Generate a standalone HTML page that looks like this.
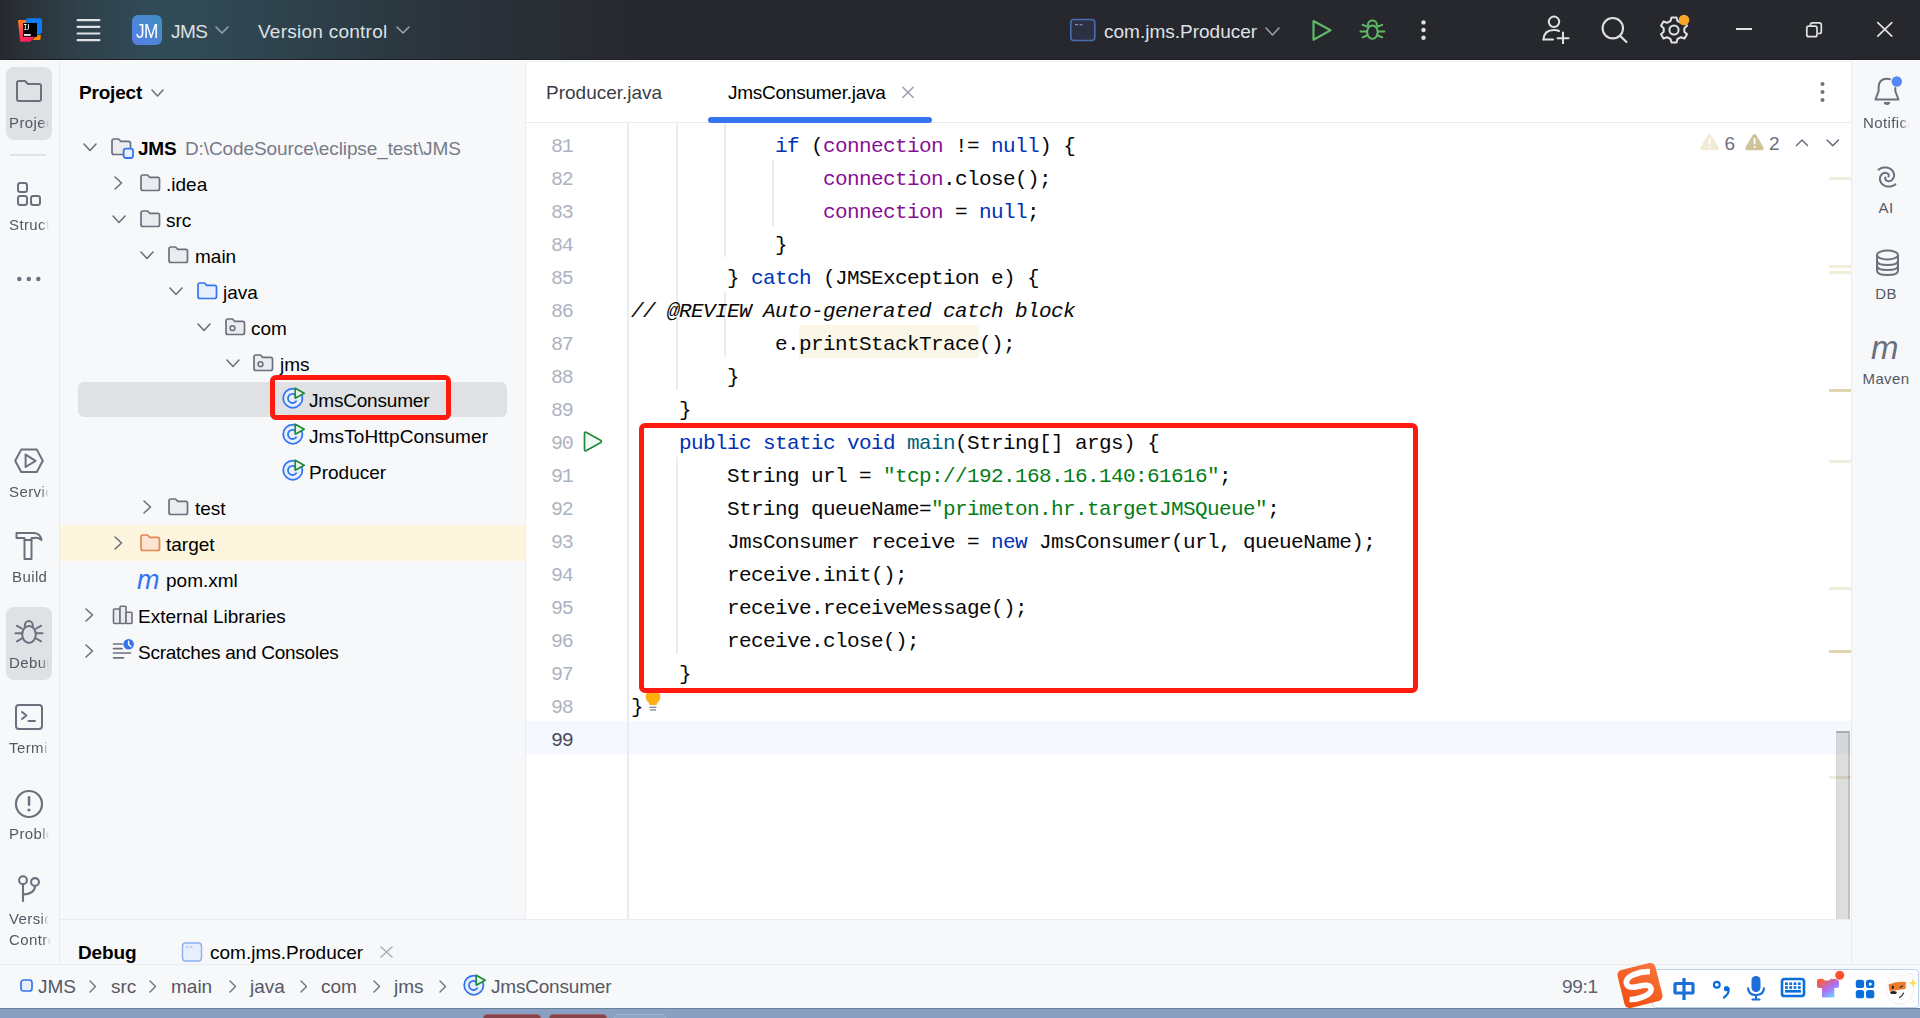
<!DOCTYPE html><html><head><meta charset="utf-8"><style>
html,body{margin:0;padding:0;}
body{width:1920px;height:1018px;position:relative;overflow:hidden;background:#F7F8FA;font-family:"Liberation Sans", sans-serif;}
.t{position:absolute;white-space:pre;}
.box{position:absolute;}
.code{position:absolute;left:631px;white-space:pre;font-family:"Liberation Mono", monospace;font-size:21px;letter-spacing:-0.6px;height:33px;line-height:33px;color:#080808;}
.ln{position:absolute;width:60px;left:512.5px;text-align:right;white-space:pre;font-family:"Liberation Mono", monospace;font-size:20px;letter-spacing:-1.2px;height:33px;line-height:33px;color:#AEB3C2;}
.kw{color:#0033B3}.fld{color:#871094}.str{color:#067D17}.mth{color:#00627A}
</style></head><body>
<div class="box" style="left:0;top:0;width:1920px;height:60px;background:#27282E;"></div>
<div class="box" style="left:0;top:0;width:700px;height:59px;background:linear-gradient(to right, #27282E 0px, #2A2F36 18px, #2F414B 80px, #314B56 150px, #314C57 175px, #2F4550 260px, #2C3A43 370px, #2A3139 480px, #27282E 640px);"></div>
<svg style="position:absolute;left:17px;top:17px;" width="26" height="26" viewBox="0 0 26 26"><defs><linearGradient id="lg1" x1="0" y1="0" x2="0.3" y2="1"><stop offset="0" stop-color="#FF8A12"/><stop offset="0.55" stop-color="#FF3A5C"/><stop offset="1" stop-color="#FF2158"/></linearGradient></defs><path d="M1 4 Q1 3 2.2 3 H9.5 L12 8 L22 16 L13 24.8 H4 Q3.2 24.8 3.1 24 Z" fill="url(#lg1)"/><path d="M9.4 1.6 Q9.9 1.3 10.5 1.3 H23.6 Q25 1.3 25 2.8 V15.6 L19 19.5 H8 Z" fill="#0A7BFA"/><path d="M15.6 22.9 L19.5 19 L23.6 17.5 V21.8 Q23.6 22.9 22.5 22.9 Z" fill="#FF8A00"/><rect x="6" y="6" width="14" height="13.8" fill="#000"/><path d="M7 7.1 H9.6 V7.9 H8.7 V11.9 H9.6 V12.7 H7 V11.9 H7.9 V7.9 H7 Z" fill="#fff"/><path d="M10.9 7.1 H11.8 V11.6 Q11.8 12.7 10.8 12.7 H9.9 V11.9 H10.9 Z" fill="#fff"/><rect x="7" y="17.1" width="6.7" height="1.7" fill="#fff"/></svg>
<svg style="position:absolute;left:76px;top:18px;" width="26" height="24" viewBox="0 0 26 24"><rect x="0.5" y="1.0" width="24" height="2.2" rx="1.1" fill="#DFE1E5"/><rect x="0.5" y="7.7" width="24" height="2.2" rx="1.1" fill="#DFE1E5"/><rect x="0.5" y="14.4" width="24" height="2.2" rx="1.1" fill="#DFE1E5"/><rect x="0.5" y="21.1" width="24" height="2.2" rx="1.1" fill="#DFE1E5"/></svg>
<svg style="position:absolute;left:132px;top:15px;" width="30" height="30" viewBox="0 0 30 30"><defs><linearGradient id="jm" x1="0" y1="1" x2="1" y2="0"><stop offset="0" stop-color="#5A7FE8"/><stop offset="1" stop-color="#3E8FC2"/></linearGradient></defs><rect x="0" y="0" width="30" height="30" rx="6" fill="url(#jm)"/></svg>
<div class="t" style="left:136px;top:16.0px;height:30px;line-height:30px;font-size:20px;color:#FFFFFF;font-weight:normal;letter-spacing:-0.6px;transform:scaleX(0.86);transform-origin:0 0;">JM</div>
<div class="t" style="left:171px;top:16.8px;height:30px;line-height:30px;font-size:19px;color:#DFE1E5;font-weight:normal;letter-spacing:-0.6px;">JMS</div>
<svg style="position:absolute;left:214.0px;top:25.0px;" width="16" height="10" viewBox="0 0 16 10"><path d="M2 2 L8.0 8 L14 2" fill="none" stroke="#9DA0A8" stroke-width="1.6" stroke-linecap="round" stroke-linejoin="round"/></svg>
<div class="t" style="left:258px;top:16.8px;height:30px;line-height:30px;font-size:19px;color:#DFE1E5;font-weight:normal;letter-spacing:0.25px;">Version control</div>
<svg style="position:absolute;left:395.0px;top:25.0px;" width="16" height="10" viewBox="0 0 16 10"><path d="M2 2 L8.0 8 L14 2" fill="none" stroke="#9DA0A8" stroke-width="1.6" stroke-linecap="round" stroke-linejoin="round"/></svg>
<svg style="position:absolute;left:1069px;top:18px;" width="28" height="24" viewBox="0 0 28 24"><rect x="1.8" y="1.5" width="24" height="21" rx="3" fill="#2B3142" stroke="#4A6DB0" stroke-width="1.6"/><rect x="6" y="6" width="3" height="1.3" fill="#7A8FC0"/><rect x="10.5" y="6" width="3" height="1.3" fill="#7A8FC0"/></svg>
<div class="t" style="left:1104px;top:16.8px;height:30px;line-height:30px;font-size:19px;color:#DFE1E5;font-weight:normal;">com.jms.Producer</div>
<svg style="position:absolute;left:1263.5px;top:26.0px;" width="17" height="11" viewBox="0 0 17 11"><path d="M2 2 L8.5 9 L15 2" fill="none" stroke="#9DA0A8" stroke-width="1.6" stroke-linecap="round" stroke-linejoin="round"/></svg>
<svg style="position:absolute;left:1310px;top:18px;" width="24" height="25" viewBox="0 0 24 25"><path d="M3.5 3 L20.5 12.3 L3.5 21.7 Z" fill="none" stroke="#5FB865" stroke-width="2.2" stroke-linejoin="round"/></svg>
<svg style="position:absolute;left:1358px;top:17px;" width="30" height="26" viewBox="0 0 30 26"><g fill="none" stroke="#5FB865" stroke-width="2" stroke-linecap="round"><path d="M10 8.5 V7.4 A4.4 3.9 0 0 1 18.8 7.4 V8.5"/><ellipse cx="14.4" cy="15.1" rx="5.3" ry="6.6"/><path d="M4.6 7.9 L9 9.5 M2.5 14.4 H8.5 M4.6 20.4 L9 18.5 M24.2 7.9 L19.8 9.5 M26.3 14.4 H20.3 M24.2 20.4 L19.8 18.5"/></g></svg>
<svg style="position:absolute;left:1419px;top:19px;" width="9" height="22" viewBox="0 0 9 22"><circle cx="4.5" cy="3.4" r="2.2" fill="#DFE1E5"/><circle cx="4.5" cy="11" r="2.2" fill="#DFE1E5"/><circle cx="4.5" cy="18.7" r="2.2" fill="#DFE1E5"/></svg>
<svg style="position:absolute;left:1540px;top:14px;" width="32" height="30" viewBox="0 0 32 30"><g fill="none" stroke="#DFE1E5" stroke-width="2" stroke-linecap="round"><circle cx="14" cy="7.8" r="5.2"/><path d="M3.5 25.5 Q4 16 14 16 Q17 16 19 17"/><path d="M3.5 25.5 H13"/><path d="M23 18.5 V30 M17.5 24.3 H28.5"/></g></svg>
<svg style="position:absolute;left:1598px;top:14px;" width="32" height="32" viewBox="0 0 32 32"><g fill="none" stroke="#DFE1E5" stroke-width="2.1" stroke-linecap="round"><circle cx="14.8" cy="14.2" r="10.2"/><path d="M22 21.7 L28.5 28"/></g></svg>
<svg style="position:absolute;left:1660px;top:15px;" width="30" height="30" viewBox="0 0 30 30"><g fill="none" stroke="#DFE1E5" stroke-width="2" stroke-linejoin="round"><path d="M11.5 2.5 H16.5 L17.5 6 L21 7.8 L24.5 6.5 L27 10.8 L24.3 13.2 V16.8 L27 19.2 L24.5 23.5 L21 22.2 L17.5 24 L16.5 27.5 H11.5 L10.5 24 L7 22.2 L3.5 23.5 L1 19.2 L3.7 16.8 V13.2 L1 10.8 L3.5 6.5 L7 7.8 L10.5 6 Z"/><circle cx="14" cy="15" r="4.6"/></g></svg>
<svg style="position:absolute;left:1678px;top:14px;" width="12" height="12" viewBox="0 0 12 12"><circle cx="6" cy="6" r="5.3" fill="#F6A623"/></svg>
<div class="box" style="left:1736px;top:28px;width:16px;height:2px;background:#DFE1E5;"></div>
<svg style="position:absolute;left:1805px;top:21px;" width="20" height="19" viewBox="0 0 20 19"><g fill="none" stroke="#DFE1E5" stroke-width="1.7"><rect x="1.8" y="5.2" width="10.2" height="10.5" rx="2"/><path d="M5.5 4.8 V3.8 Q5.5 1.8 7.5 1.8 H14.3 Q16.3 1.8 16.3 3.8 V10.5 Q16.3 12.5 14.3 12.5 H13"/></g></svg>
<svg style="position:absolute;left:1874px;top:19px;" width="22" height="21" viewBox="0 0 22 21"><g stroke="#DFE1E5" stroke-width="1.7" stroke-linecap="round"><path d="M3.8 3.6 L17.8 17.2 M17.8 3.6 L3.8 17.2"/></g></svg>
<div class="box" style="left:59px;top:60px;width:1px;height:905px;background:#EBECF0;"></div>
<div class="box" style="left:6px;top:67px;width:46px;height:73px;border-radius:8px;background:#DFE1E5;"></div>
<svg style="position:absolute;left:15px;top:79px;" width="28" height="24" viewBox="0 0 28 24"><path d="M2 4 Q2 2 4 2 H10 L13 5 H24 Q26 5 26 7 V20 Q26 22 24 22 H4 Q2 22 2 20 Z" fill="none" stroke="#6C707E" stroke-width="2" stroke-linejoin="round"/></svg>
<div class="t" style="left:9px;top:110.5px;width:40px;overflow:hidden;height:24px;line-height:24px;font-size:15px;letter-spacing:0.4px;color:#555864;-webkit-mask-image:linear-gradient(to right,#000 80%,transparent 100%);mask-image:linear-gradient(to right,#000 80%,transparent 100%);">Project</div>
<div class="box" style="left:10px;top:154px;width:36px;height:2px;background:#DFE1E5;"></div>
<svg style="position:absolute;left:16px;top:180.5px;" width="28" height="30" viewBox="0 0 28 30"><g fill="none" stroke="#6C707E" stroke-width="2"><rect x="2" y="2" width="9" height="9" rx="2.2"/><rect x="2" y="15" width="9" height="9" rx="2.2"/><rect x="15" y="15" width="9" height="9" rx="2.2"/></g></svg>
<div class="t" style="left:9px;top:212.5px;width:40px;overflow:hidden;height:24px;line-height:24px;font-size:15px;letter-spacing:0.4px;color:#555864;-webkit-mask-image:linear-gradient(to right,#000 80%,transparent 100%);mask-image:linear-gradient(to right,#000 80%,transparent 100%);">Structure</div>
<svg style="position:absolute;left:15px;top:273px;" width="28" height="12" viewBox="0 0 28 12"><g fill="#6C707E"><circle cx="4.3" cy="6" r="2.2"/><circle cx="13.8" cy="6" r="2.2"/><circle cx="23.3" cy="6" r="2.2"/></g></svg>
<svg style="position:absolute;left:13px;top:446px;" width="32" height="30" viewBox="0 0 32 30"><g fill="none" stroke="#6C707E" stroke-width="2" stroke-linejoin="round"><path d="M8.2 3.6 H23.8 L29.8 14.8 L23.8 26 H8.2 L2.2 14.8 Z"/><path d="M12.6 8.6 L22.6 14.8 L12.6 21 Z"/></g></svg>
<div class="t" style="left:9px;top:479.5px;width:40px;overflow:hidden;height:24px;line-height:24px;font-size:15px;letter-spacing:0.4px;color:#555864;-webkit-mask-image:linear-gradient(to right,#000 80%,transparent 100%);mask-image:linear-gradient(to right,#000 80%,transparent 100%);">Services</div>
<svg style="position:absolute;left:14px;top:530px;" width="30" height="32" viewBox="0 0 30 32"><g fill="none" stroke="#6C707E" stroke-width="2" stroke-linejoin="round"><path d="M2.5 3 H20 Q26.5 3.5 27.5 10 Q24 7 20 8 H17.5 V10 H10.5 V8 H2.5 Z"/><path d="M10.5 10 V29 H17.5 V10"/></g></svg>
<div class="t" style="left:12px;top:564.5px;width:50px;overflow:hidden;height:24px;line-height:24px;font-size:15px;letter-spacing:0.4px;color:#555864;-webkit-mask-image:linear-gradient(to right,#000 80%,transparent 100%);mask-image:linear-gradient(to right,#000 80%,transparent 100%);">Build</div>
<div class="box" style="left:6px;top:607px;width:46px;height:73px;border-radius:8px;background:#DFE1E5;"></div>
<svg style="position:absolute;left:14px;top:617px;" width="30" height="30" viewBox="0 0 30 30"><g fill="none" stroke="#6C707E" stroke-width="2" stroke-linecap="round"><path d="M10.8 9.5 V8.6 A4 4.6 0 0 1 18.8 8.6 V9.5"/><ellipse cx="15" cy="17.4" rx="6.8" ry="8.5"/><path d="M3 8.8 L7.8 11.5 M1.5 16.2 H7.3 M3 24.3 L7.8 21.5 M27 8.8 L22.2 11.5 M28.5 16.2 H22.7 M27 24.3 L22.2 21.5"/></g></svg>
<div class="t" style="left:9px;top:650.5px;width:40px;overflow:hidden;height:24px;line-height:24px;font-size:15px;letter-spacing:0.4px;color:#555864;-webkit-mask-image:linear-gradient(to right,#000 80%,transparent 100%);mask-image:linear-gradient(to right,#000 80%,transparent 100%);">Debug</div>
<svg style="position:absolute;left:14px;top:703px;" width="30" height="28" viewBox="0 0 30 28"><g fill="none" stroke="#6C707E" stroke-width="2" stroke-linecap="round" stroke-linejoin="round"><rect x="2" y="2" width="26" height="24" rx="3"/><path d="M8 9 L12.5 12.5 L8 16 M14.5 18 H21"/></g></svg>
<div class="t" style="left:9px;top:735.5px;width:40px;overflow:hidden;height:24px;line-height:24px;font-size:15px;letter-spacing:0.4px;color:#555864;-webkit-mask-image:linear-gradient(to right,#000 80%,transparent 100%);mask-image:linear-gradient(to right,#000 80%,transparent 100%);">Terminal</div>
<svg style="position:absolute;left:13px;top:788px;" width="32" height="32" viewBox="0 0 32 32"><g fill="none" stroke="#6C707E" stroke-width="2.2"><circle cx="16" cy="16" r="13"/></g><rect x="14.8" y="8" width="2.5" height="10" rx="1.2" fill="#6C707E"/><circle cx="16" cy="22" r="1.6" fill="#6C707E"/></svg>
<div class="t" style="left:9px;top:821.5px;width:40px;overflow:hidden;height:24px;line-height:24px;font-size:15px;letter-spacing:0.4px;color:#555864;-webkit-mask-image:linear-gradient(to right,#000 80%,transparent 100%);mask-image:linear-gradient(to right,#000 80%,transparent 100%);">Problems</div>
<svg style="position:absolute;left:14px;top:872px;" width="30" height="32" viewBox="0 0 30 32"><g fill="none" stroke="#6C707E" stroke-width="2.1" stroke-linecap="round"><circle cx="9" cy="8.2" r="3.9"/><circle cx="21" cy="10" r="3.9"/><path d="M9 12.1 V29 M21 13.9 Q21 21.5 9 22.5"/></g></svg>
<div class="t" style="left:9px;top:906.5px;width:40px;overflow:hidden;height:24px;line-height:24px;font-size:15px;letter-spacing:0.4px;color:#555864;-webkit-mask-image:linear-gradient(to right,#000 80%,transparent 100%);mask-image:linear-gradient(to right,#000 80%,transparent 100%);">Version Control</div>
<div class="t" style="left:9px;top:927.5px;width:42px;overflow:hidden;height:24px;line-height:24px;font-size:15px;letter-spacing:0.4px;color:#555864;-webkit-mask-image:linear-gradient(to right,#000 80%,transparent 100%);mask-image:linear-gradient(to right,#000 80%,transparent 100%);">Control</div>
<div class="t" style="left:79px;top:74.8px;height:36px;line-height:36px;font-size:19px;color:#000;font-weight:bold;letter-spacing:-0.2px;">Project</div>
<svg style="position:absolute;left:149.5px;top:88.0px;" width="15" height="10" viewBox="0 0 15 10"><path d="M2 2 L7.5 8 L13 2" fill="none" stroke="#6C707E" stroke-width="1.6" stroke-linecap="round" stroke-linejoin="round"/></svg>
<div class="box" style="left:78px;top:382px;width:429px;height:35px;border-radius:6px;background:#DFE1E5;"></div>
<div class="box" style="left:60px;top:525px;width:465px;height:36px;background:#FDF5DD;"></div>
<svg style="position:absolute;left:82.0px;top:141.75px;" width="16" height="10.5" viewBox="0 0 16 10.5"><path d="M2 2 L8.0 8.5 L14 2" fill="none" stroke="#6C707E" stroke-width="1.6" stroke-linecap="round" stroke-linejoin="round"/></svg>
<svg style="position:absolute;left:111px;top:138px;" width="21" height="18" viewBox="0 0 21 18"><path d="M1 3 Q1 1 3 1 H7.5 L9.8 3.3 H17.5 Q19.5 3.3 19.5 5.3 V14.5 Q19.5 16.5 17.5 16.5 H3 Q1 16.5 1 14.5 Z" fill="#EBECF0" stroke="#6C707E" stroke-width="1.7" stroke-linejoin="round"/></svg>
<svg style="position:absolute;left:122px;top:147px;" width="13" height="13" viewBox="0 0 13 13"><rect x="1.6" y="1.6" width="9.4" height="9.4" rx="2.2" fill="#E7EFFD" stroke="#3574F0" stroke-width="1.8"/></svg>
<div class="t" style="left:138px;top:130.8px;height:36px;line-height:36px;font-size:19px;color:#000;font-weight:bold;letter-spacing:-0.2px;">JMS</div>
<div class="t" style="left:185px;top:130.8px;height:36px;line-height:36px;font-size:19px;color:#777B89;font-weight:normal;letter-spacing:-0.1px;">D:\CodeSource\eclipse_test\JMS</div>
<svg style="position:absolute;left:113.25px;top:175.0px;" width="10.5" height="16" viewBox="0 0 10.5 16"><path d="M2 2 L8.5 8.0 L2 14" fill="none" stroke="#6C707E" stroke-width="1.6" stroke-linecap="round" stroke-linejoin="round"/></svg>
<svg style="position:absolute;left:140px;top:174px;" width="21" height="18" viewBox="0 0 21 18"><path d="M1 3 Q1 1 3 1 H7.5 L9.8 3.3 H17.5 Q19.5 3.3 19.5 5.3 V14.5 Q19.5 16.5 17.5 16.5 H3 Q1 16.5 1 14.5 Z" fill="#EBECF0" stroke="#6C707E" stroke-width="1.7" stroke-linejoin="round"/></svg>
<div class="t" style="left:166px;top:166.8px;height:36px;line-height:36px;font-size:19px;color:#000;font-weight:normal;">.idea</div>
<svg style="position:absolute;left:111.0px;top:213.75px;" width="16" height="10.5" viewBox="0 0 16 10.5"><path d="M2 2 L8.0 8.5 L14 2" fill="none" stroke="#6C707E" stroke-width="1.6" stroke-linecap="round" stroke-linejoin="round"/></svg>
<svg style="position:absolute;left:140px;top:210px;" width="21" height="18" viewBox="0 0 21 18"><path d="M1 3 Q1 1 3 1 H7.5 L9.8 3.3 H17.5 Q19.5 3.3 19.5 5.3 V14.5 Q19.5 16.5 17.5 16.5 H3 Q1 16.5 1 14.5 Z" fill="#EBECF0" stroke="#6C707E" stroke-width="1.7" stroke-linejoin="round"/></svg>
<div class="t" style="left:166px;top:202.8px;height:36px;line-height:36px;font-size:19px;color:#000;font-weight:normal;">src</div>
<svg style="position:absolute;left:139.0px;top:249.75px;" width="16" height="10.5" viewBox="0 0 16 10.5"><path d="M2 2 L8.0 8.5 L14 2" fill="none" stroke="#6C707E" stroke-width="1.6" stroke-linecap="round" stroke-linejoin="round"/></svg>
<svg style="position:absolute;left:168px;top:246px;" width="21" height="18" viewBox="0 0 21 18"><path d="M1 3 Q1 1 3 1 H7.5 L9.8 3.3 H17.5 Q19.5 3.3 19.5 5.3 V14.5 Q19.5 16.5 17.5 16.5 H3 Q1 16.5 1 14.5 Z" fill="#EBECF0" stroke="#6C707E" stroke-width="1.7" stroke-linejoin="round"/></svg>
<div class="t" style="left:195px;top:238.8px;height:36px;line-height:36px;font-size:19px;color:#000;font-weight:normal;">main</div>
<svg style="position:absolute;left:168.0px;top:285.75px;" width="16" height="10.5" viewBox="0 0 16 10.5"><path d="M2 2 L8.0 8.5 L14 2" fill="none" stroke="#6C707E" stroke-width="1.6" stroke-linecap="round" stroke-linejoin="round"/></svg>
<svg style="position:absolute;left:197px;top:282px;" width="21" height="18" viewBox="0 0 21 18"><path d="M1 3 Q1 1 3 1 H7.5 L9.8 3.3 H17.5 Q19.5 3.3 19.5 5.3 V14.5 Q19.5 16.5 17.5 16.5 H3 Q1 16.5 1 14.5 Z" fill="#E7EFFD" stroke="#3574F0" stroke-width="1.7" stroke-linejoin="round"/></svg>
<div class="t" style="left:223px;top:274.8px;height:36px;line-height:36px;font-size:19px;color:#000;font-weight:normal;">java</div>
<svg style="position:absolute;left:196.0px;top:321.75px;" width="16" height="10.5" viewBox="0 0 16 10.5"><path d="M2 2 L8.0 8.5 L14 2" fill="none" stroke="#6C707E" stroke-width="1.6" stroke-linecap="round" stroke-linejoin="round"/></svg>
<svg style="position:absolute;left:225px;top:318px;" width="21" height="18" viewBox="0 0 21 18"><path d="M1 3 Q1 1 3 1 H7.5 L9.8 3.3 H17.5 Q19.5 3.3 19.5 5.3 V14.5 Q19.5 16.5 17.5 16.5 H3 Q1 16.5 1 14.5 Z" fill="#EBECF0" stroke="#6C707E" stroke-width="1.7" stroke-linejoin="round"/><circle cx="7.5" cy="10.2" r="2.4" fill="none" stroke="#6C707E" stroke-width="1.5"/></svg>
<div class="t" style="left:251px;top:310.8px;height:36px;line-height:36px;font-size:19px;color:#000;font-weight:normal;">com</div>
<svg style="position:absolute;left:225.0px;top:357.75px;" width="16" height="10.5" viewBox="0 0 16 10.5"><path d="M2 2 L8.0 8.5 L14 2" fill="none" stroke="#6C707E" stroke-width="1.6" stroke-linecap="round" stroke-linejoin="round"/></svg>
<svg style="position:absolute;left:253px;top:354px;" width="21" height="18" viewBox="0 0 21 18"><path d="M1 3 Q1 1 3 1 H7.5 L9.8 3.3 H17.5 Q19.5 3.3 19.5 5.3 V14.5 Q19.5 16.5 17.5 16.5 H3 Q1 16.5 1 14.5 Z" fill="#EBECF0" stroke="#6C707E" stroke-width="1.7" stroke-linejoin="round"/><circle cx="7.5" cy="10.2" r="2.4" fill="none" stroke="#6C707E" stroke-width="1.5"/></svg>
<div class="t" style="left:280px;top:346.8px;height:36px;line-height:36px;font-size:19px;color:#000;font-weight:normal;">jms</div>
<svg style="position:absolute;left:282px;top:387px;" width="24" height="23" viewBox="0 0 24 23"><circle cx="10.8" cy="11.2" r="9.6" fill="#E7EFFD" stroke="#3574F0" stroke-width="1.8"/><path d="M14.2 8.6 A4.6 4.6 0 1 0 14.6 13.6" fill="none" stroke="#3574F0" stroke-width="1.8"/><path d="M13.2 1.2 L22.2 6.2 L13.2 11.2 Z" fill="#E8F5E9" stroke="#208A3C" stroke-width="1.7" stroke-linejoin="round"/></svg>
<div class="t" style="left:309px;top:382.8px;height:36px;line-height:36px;font-size:19px;color:#000;font-weight:normal;letter-spacing:-0.2px;">JmsConsumer</div>
<svg style="position:absolute;left:282px;top:423px;" width="24" height="23" viewBox="0 0 24 23"><circle cx="10.8" cy="11.2" r="9.6" fill="#E7EFFD" stroke="#3574F0" stroke-width="1.8"/><path d="M14.2 8.6 A4.6 4.6 0 1 0 14.6 13.6" fill="none" stroke="#3574F0" stroke-width="1.8"/><path d="M13.2 1.2 L22.2 6.2 L13.2 11.2 Z" fill="#E8F5E9" stroke="#208A3C" stroke-width="1.7" stroke-linejoin="round"/></svg>
<div class="t" style="left:309px;top:418.8px;height:36px;line-height:36px;font-size:19px;color:#000;font-weight:normal;letter-spacing:0.1px;">JmsToHttpConsumer</div>
<svg style="position:absolute;left:282px;top:459px;" width="24" height="23" viewBox="0 0 24 23"><circle cx="10.8" cy="11.2" r="9.6" fill="#E7EFFD" stroke="#3574F0" stroke-width="1.8"/><path d="M14.2 8.6 A4.6 4.6 0 1 0 14.6 13.6" fill="none" stroke="#3574F0" stroke-width="1.8"/><path d="M13.2 1.2 L22.2 6.2 L13.2 11.2 Z" fill="#E8F5E9" stroke="#208A3C" stroke-width="1.7" stroke-linejoin="round"/></svg>
<div class="t" style="left:309px;top:454.8px;height:36px;line-height:36px;font-size:19px;color:#000;font-weight:normal;">Producer</div>
<svg style="position:absolute;left:141.75px;top:499.0px;" width="10.5" height="16" viewBox="0 0 10.5 16"><path d="M2 2 L8.5 8.0 L2 14" fill="none" stroke="#6C707E" stroke-width="1.6" stroke-linecap="round" stroke-linejoin="round"/></svg>
<svg style="position:absolute;left:168px;top:498px;" width="21" height="18" viewBox="0 0 21 18"><path d="M1 3 Q1 1 3 1 H7.5 L9.8 3.3 H17.5 Q19.5 3.3 19.5 5.3 V14.5 Q19.5 16.5 17.5 16.5 H3 Q1 16.5 1 14.5 Z" fill="#EBECF0" stroke="#6C707E" stroke-width="1.7" stroke-linejoin="round"/></svg>
<div class="t" style="left:195px;top:490.8px;height:36px;line-height:36px;font-size:19px;color:#000;font-weight:normal;">test</div>
<svg style="position:absolute;left:113.25px;top:535.0px;" width="10.5" height="16" viewBox="0 0 10.5 16"><path d="M2 2 L8.5 8.0 L2 14" fill="none" stroke="#6C707E" stroke-width="1.6" stroke-linecap="round" stroke-linejoin="round"/></svg>
<svg style="position:absolute;left:140px;top:534px;" width="21" height="18" viewBox="0 0 21 18"><path d="M1 3 Q1 1 3 1 H7.5 L9.8 3.3 H17.5 Q19.5 3.3 19.5 5.3 V14.5 Q19.5 16.5 17.5 16.5 H3 Q1 16.5 1 14.5 Z" fill="#FCE3D2" stroke="#E08855" stroke-width="1.7" stroke-linejoin="round"/></svg>
<div class="t" style="left:166px;top:526.8px;height:36px;line-height:36px;font-size:19px;color:#000;font-weight:normal;">target</div>
<div class="t" style="left:137px;top:561.8px;height:36px;line-height:36px;font-size:27px;color:#3574F0;font-weight:normal;letter-spacing:0px;font-style:italic;">m</div>
<div class="t" style="left:166px;top:562.8px;height:36px;line-height:36px;font-size:19px;color:#000;font-weight:normal;">pom.xml</div>
<svg style="position:absolute;left:84.25px;top:607.0px;" width="10.5" height="16" viewBox="0 0 10.5 16"><path d="M2 2 L8.5 8.0 L2 14" fill="none" stroke="#6C707E" stroke-width="1.6" stroke-linecap="round" stroke-linejoin="round"/></svg>
<svg style="position:absolute;left:112px;top:605px;" width="22" height="20" viewBox="0 0 22 20"><g fill="#EBECF0" stroke="#6C707E" stroke-width="1.6" stroke-linejoin="round"><rect x="1.5" y="4" width="6.5" height="14.5" rx="1"/><rect x="8" y="1.2" width="6" height="17.3" rx="1"/><rect x="14" y="7.2" width="6" height="11.3" rx="1"/></g></svg>
<div class="t" style="left:138px;top:598.8px;height:36px;line-height:36px;font-size:19px;color:#000;font-weight:normal;letter-spacing:0px;">External Libraries</div>
<svg style="position:absolute;left:84.25px;top:643.0px;" width="10.5" height="16" viewBox="0 0 10.5 16"><path d="M2 2 L8.5 8.0 L2 14" fill="none" stroke="#6C707E" stroke-width="1.6" stroke-linecap="round" stroke-linejoin="round"/></svg>
<svg style="position:absolute;left:112px;top:638px;" width="24" height="22" viewBox="0 0 24 22"><g stroke="#6C707E" stroke-width="1.7" stroke-linecap="round"><path d="M1.5 6 H10 M1.5 10.6 H10 M1.5 15 H18.5 M1.5 19.8 H11.5"/></g><circle cx="16.6" cy="6.3" r="5.3" fill="#3574F0"/><path d="M16.6 3.3 V6.5 L18.8 8.4" fill="none" stroke="#fff" stroke-width="1.4" stroke-linecap="round"/></svg>
<div class="t" style="left:138px;top:634.8px;height:36px;line-height:36px;font-size:19px;color:#000;font-weight:normal;letter-spacing:-0.25px;">Scratches and Consoles</div>
<div class="box" style="left:525px;top:60px;width:1px;height:860px;background:#EBECF0;"></div>
<div class="box" style="left:526px;top:60px;width:1325px;height:859px;background:#FFFFFF;"></div>
<div class="box" style="left:526px;top:122px;width:1325px;height:1px;background:#EBECF0;"></div>
<div class="t" style="left:546px;top:74.8px;height:36px;line-height:36px;font-size:19px;color:#3C3E45;font-weight:normal;letter-spacing:0px;">Producer.java</div>
<div class="t" style="left:728px;top:74.8px;height:36px;line-height:36px;font-size:19px;color:#000;font-weight:normal;letter-spacing:-0.25px;">JmsConsumer.java</div>
<svg style="position:absolute;left:900px;top:85px;" width="16" height="15" viewBox="0 0 16 15"><path d="M2.8 2.3 L13.2 12.5 M13.2 2.3 L2.8 12.5" stroke="#9A9EAB" stroke-width="1.5" stroke-linecap="round"/></svg>
<div class="box" style="left:708px;top:117px;width:224px;height:6px;border-radius:3px;background:#3574F0;"></div>
<svg style="position:absolute;left:1818px;top:80px;" width="9" height="24" viewBox="0 0 9 24"><circle cx="4.5" cy="4" r="2" fill="#6C707E"/><circle cx="4.5" cy="12" r="2" fill="#6C707E"/><circle cx="4.5" cy="20" r="2" fill="#6C707E"/></svg>
<div class="box" style="left:526px;top:721px;width:1325px;height:33px;background:#F5F8FE;"></div>
<div class="box" style="left:627px;top:123px;width:1.5px;height:796px;background:#EBECF0;"></div>
<div class="box" style="left:676px;top:123px;width:1.5px;height:267px;background:#EBECF0;"></div>
<div class="box" style="left:724px;top:123px;width:1.5px;height:134px;background:#EBECF0;"></div>
<div class="box" style="left:724px;top:292px;width:1.5px;height:65px;background:#EBECF0;"></div>
<div class="box" style="left:772px;top:160px;width:1.5px;height:66px;background:#EBECF0;"></div>
<div class="box" style="left:676px;top:457px;width:1.5px;height:197px;background:#EBECF0;"></div>
<div class="box" style="left:799px;top:325px;width:180px;height:33px;background:#FAF6E8;"></div>
<div class="ln" style="top:130px;">81</div>
<div class="code" style="top:130px;">            <span class="kw">if</span> (<span class="fld">connection</span> != <span class="kw">null</span>) {</div>
<div class="ln" style="top:163px;">82</div>
<div class="code" style="top:163px;">                <span class="fld">connection</span>.close();</div>
<div class="ln" style="top:196px;">83</div>
<div class="code" style="top:196px;">                <span class="fld">connection</span> = <span class="kw">null</span>;</div>
<div class="ln" style="top:229px;">84</div>
<div class="code" style="top:229px;">            }</div>
<div class="ln" style="top:262px;">85</div>
<div class="code" style="top:262px;">        } <span class="kw">catch</span> (JMSException e) {</div>
<div class="ln" style="top:295px;">86</div>
<div class="code" style="top:295px;"><i>// @REVIEW Auto-generated catch block</i></div>
<div class="ln" style="top:328px;">87</div>
<div class="code" style="top:328px;">            e.printStackTrace();</div>
<div class="ln" style="top:361px;">88</div>
<div class="code" style="top:361px;">        }</div>
<div class="ln" style="top:394px;">89</div>
<div class="code" style="top:394px;">    }</div>
<div class="ln" style="top:427px;">90</div>
<div class="code" style="top:427px;">    <span class="kw">public static void</span> <span class="mth">main</span>(String[] args) {</div>
<div class="ln" style="top:460px;">91</div>
<div class="code" style="top:460px;">        String url = <span class="str">"tcp://192.168.16.140:61616"</span>;</div>
<div class="ln" style="top:493px;">92</div>
<div class="code" style="top:493px;">        String queueName=<span class="str">"primeton.hr.targetJMSQueue"</span>;</div>
<div class="ln" style="top:526px;">93</div>
<div class="code" style="top:526px;">        JmsConsumer receive = <span class="kw">new</span> JmsConsumer(url, queueName);</div>
<div class="ln" style="top:559px;">94</div>
<div class="code" style="top:559px;">        receive.init();</div>
<div class="ln" style="top:592px;">95</div>
<div class="code" style="top:592px;">        receive.receiveMessage();</div>
<div class="ln" style="top:625px;">96</div>
<div class="code" style="top:625px;">        receive.close();</div>
<div class="ln" style="top:658px;">97</div>
<div class="code" style="top:658px;">    }</div>
<div class="ln" style="top:691px;">98</div>
<div class="code" style="top:691px;">}</div>
<div class="ln" style="top:724px;color:#494B57;">99</div>
<svg style="position:absolute;left:580px;top:429px;" width="26" height="26" viewBox="0 0 26 26"><path d="M4.5 4.5 Q4.5 2.5 6.5 3.5 L20.5 11.3 Q22.3 12.6 20.5 13.8 L6.5 21.6 Q4.5 22.6 4.5 20.6 Z" fill="#F0F9F1" stroke="#208A3C" stroke-width="1.7" stroke-linejoin="round"/></svg>
<svg style="position:absolute;left:643px;top:688px;" width="20" height="26" viewBox="0 0 20 26"><path d="M10 1.5 A7.2 7.2 0 0 1 15 14 Q13.5 15.5 13.5 17 H6.5 Q6.5 15.5 5 14 A7.2 7.2 0 0 1 10 1.5 Z" fill="#FFAF0F"/><rect x="6.5" y="18.6" width="7" height="1.4" fill="#8A8E9A"/><rect x="7" y="21.2" width="6" height="1.4" fill="#8A8E9A"/></svg>
<div class="box" style="left:269.5px;top:375px;width:181.3px;height:44.5px;border:5.4px solid #FF1A10;border-radius:6px;box-sizing:border-box;"></div>
<div class="box" style="left:638.5px;top:423px;width:779px;height:269.5px;border:5.4px solid #FF1A10;border-radius:6px;box-sizing:border-box;"></div>
<svg style="position:absolute;left:1699px;top:132px;" width="22" height="20" viewBox="0 0 22 20"><path d="M10.5 2 Q11.8 2 12.6 3.5 L19.3 15 Q20.4 17.9 17.8 18.2 H3.2 Q0.6 17.9 1.7 15 L8.4 3.5 Q9.2 2 10.5 2 Z" fill="#F0EAD6"/><rect x="9.6" y="6" width="1.9" height="6.5" rx="0.9" fill="#fff"/><circle cx="10.55" cy="15" r="1.1" fill="#fff"/></svg>
<div class="t" style="left:1724.5px;top:128.5px;height:30px;line-height:30px;font-size:19px;color:#6C707E;font-weight:normal;">6</div>
<svg style="position:absolute;left:1744px;top:132px;" width="22" height="20" viewBox="0 0 22 20"><path d="M10.5 2 Q11.8 2 12.6 3.5 L19.3 15 Q20.4 17.9 17.8 18.2 H3.2 Q0.6 17.9 1.7 15 L8.4 3.5 Q9.2 2 10.5 2 Z" fill="#CFC39A"/><rect x="9.6" y="6" width="1.9" height="6.5" rx="0.9" fill="#fff"/><circle cx="10.55" cy="15" r="1.1" fill="#fff"/></svg>
<div class="t" style="left:1769px;top:128.5px;height:30px;line-height:30px;font-size:19px;color:#6C707E;font-weight:normal;">2</div>
<svg style="position:absolute;left:1794px;top:137px;" width="17" height="12" viewBox="0 0 17 12"><path d="M2.5 8.5 L8 3 L13.5 8.5" fill="none" stroke="#6C707E" stroke-width="1.5" stroke-linecap="round" stroke-linejoin="round"/></svg>
<svg style="position:absolute;left:1825.25px;top:138.0px;" width="15.5" height="9.6" viewBox="0 0 15.5 9.6"><path d="M2 2 L7.75 7.6 L13.5 2" fill="none" stroke="#6C707E" stroke-width="1.5" stroke-linecap="round" stroke-linejoin="round"/></svg>
<div class="box" style="left:1829px;top:177px;width:22px;height:3px;background:#F2ECDA;"></div>
<div class="box" style="left:1829px;top:265px;width:22px;height:3px;background:#F2ECDA;"></div>
<div class="box" style="left:1829px;top:271px;width:22px;height:3px;background:#F2ECDA;"></div>
<div class="box" style="left:1829px;top:389px;width:22px;height:3px;background:#E1D5B0;"></div>
<div class="box" style="left:1829px;top:460px;width:22px;height:3px;background:#F2ECDA;"></div>
<div class="box" style="left:1829px;top:587px;width:22px;height:3px;background:#F2ECDA;"></div>
<div class="box" style="left:1829px;top:650px;width:22px;height:3px;background:#E1D5B0;"></div>
<div class="box" style="left:1829px;top:776px;width:22px;height:3px;background:#F2ECDA;"></div>
<div class="box" style="left:1836px;top:731px;width:14px;height:188px;background:rgba(0,0,0,0.135);border-top:2px solid rgba(0,0,0,0.2);border-right:2px solid rgba(0,0,0,0.12);border-left:1px solid rgba(0,0,0,0.04);box-sizing:border-box;"></div>
<div class="box" style="left:1851px;top:60px;width:1px;height:905px;background:#EBECF0;"></div>
<svg style="position:absolute;left:1873px;top:76px;" width="32" height="30" viewBox="0 0 32 30"><g fill="none" stroke="#6C707E" stroke-width="2" stroke-linecap="round" stroke-linejoin="round"><path d="M17 3.2 Q15.5 2.8 14 2.8 Q5.6 2.8 5.6 11.5 V15.2 L2.5 23.5 H25.5 L22.3 15.2 V12"/></g><path d="M10.8 26 A3.2 3 0 0 0 17.2 26 Z" fill="#6C707E"/><circle cx="23.8" cy="5.5" r="5.2" fill="#548AF7"/></svg>
<div class="t" style="left:1863px;top:110.5px;width:47px;overflow:hidden;height:24px;line-height:24px;font-size:15px;letter-spacing:0.4px;color:#555864;-webkit-mask-image:linear-gradient(to right,#000 80%,transparent 100%);">Notifications</div>
<svg style="position:absolute;left:1873px;top:163px;" width="30" height="30" viewBox="0 0 30 30"><g fill="none" stroke="#6C707E" stroke-width="2" stroke-linecap="round"><path d="M5.60 6.67 L6.82 5.84 L8.11 5.20 L9.45 4.74 L10.81 4.47 L12.16 4.38 L13.48 4.46 L14.75 4.71 L15.95 5.12 L17.04 5.66 L18.03 6.33 L18.89 7.10 L19.61 7.95 L20.20 8.87 L20.63 9.82 L20.92 10.80 L21.06 11.78 L21.06 12.73 L20.93 13.65 L20.67 14.51 L20.31 15.30 L19.85 16.01 L19.31 16.63 L18.72 17.14 L18.07 17.56 L17.40 17.86 L16.72 18.06 L16.05 18.16 L15.39 18.16 L14.78 18.07 L14.21 17.90 L13.70 17.66 L13.26 17.36 L12.90 17.02 L12.61 16.64 L12.41 16.25 L12.28 15.85 L12.23 15.47 L12.25 15.10 L12.34 14.77 L12.48 14.48"/><path d="M22.40 21.33 L21.18 22.16 L19.89 22.80 L18.55 23.26 L17.19 23.53 L15.84 23.62 L14.52 23.54 L13.25 23.29 L12.05 22.88 L10.96 22.34 L9.97 21.67 L9.11 20.90 L8.39 20.05 L7.80 19.13 L7.37 18.18 L7.08 17.20 L6.94 16.22 L6.94 15.27 L7.07 14.35 L7.33 13.49 L7.69 12.70 L8.15 11.99 L8.69 11.37 L9.28 10.86 L9.93 10.44 L10.60 10.14 L11.28 9.94 L11.95 9.84 L12.61 9.84 L13.22 9.93 L13.79 10.10 L14.30 10.34 L14.74 10.64 L15.10 10.98 L15.39 11.36 L15.59 11.75 L15.72 12.15 L15.77 12.53 L15.75 12.90 L15.66 13.23 L15.52 13.52"/></g></svg>
<div class="t" style="left:1852px;top:195.5px;width:68px;text-align:center;overflow:hidden;height:24px;line-height:24px;font-size:15px;letter-spacing:0.4px;color:#555864;">AI</div>
<svg style="position:absolute;left:1873px;top:248px;" width="30" height="30" viewBox="0 0 30 30"><g fill="none" stroke="#6C707E" stroke-width="2"><ellipse cx="14.5" cy="7" rx="10.5" ry="4.5"/><path d="M4 7 V22.5 Q4 27 14.5 27 Q25 27 25 22.5 V7 M4 12.5 Q4 17 14.5 17 Q25 17 25 12.5 M4 17.5 Q4 22 14.5 22 Q25 22 25 17.5"/></g></svg>
<div class="t" style="left:1852px;top:281.5px;width:68px;text-align:center;overflow:hidden;height:24px;line-height:24px;font-size:15px;letter-spacing:0.4px;color:#555864;">DB</div>
<div class="t" style="left:1871px;top:328.0px;height:40px;line-height:40px;font-size:33px;color:#6C707E;font-weight:normal;font-style:italic;">m</div>
<div class="t" style="left:1852px;top:366.5px;width:68px;text-align:center;overflow:hidden;height:24px;line-height:24px;font-size:15px;letter-spacing:0.4px;color:#555864;">Maven</div>
<div class="box" style="left:60px;top:919px;width:1791px;height:1px;background:#EBECF0;"></div>
<div class="t" style="left:78px;top:937.8px;height:30px;line-height:30px;font-size:19px;color:#000;font-weight:bold;letter-spacing:-0.1px;">Debug</div>
<svg style="position:absolute;left:181px;top:941px;" width="22" height="22" viewBox="0 0 22 22"><rect x="1.5" y="2" width="19" height="18" rx="3" fill="#E7EFFD" stroke="#8FB0F2" stroke-width="1.4"/><rect x="5" y="5.5" width="2.5" height="1" fill="#8FB0F2"/><rect x="9" y="5.5" width="2.5" height="1" fill="#8FB0F2"/></svg>
<div class="t" style="left:210px;top:937.8px;height:30px;line-height:30px;font-size:19px;color:#000;font-weight:normal;letter-spacing:0px;">com.jms.Producer</div>
<svg style="position:absolute;left:379px;top:945px;" width="15" height="14" viewBox="0 0 15 14"><path d="M2 2 L13 12 M13 2 L2 12" stroke="#A8ADBD" stroke-width="1.5" stroke-linecap="round"/></svg>
<div class="box" style="left:0;top:964px;width:1920px;height:1px;background:#EBECF0;"></div>
<div class="box" style="left:0;top:965px;width:1920px;height:43px;background:#F7F8FA;"></div>
<svg style="position:absolute;left:19px;top:978px;" width="16" height="16" viewBox="0 0 16 16"><rect x="2" y="2" width="11" height="11" rx="2.5" fill="#E7EFFD" stroke="#3574F0" stroke-width="1.7"/></svg>
<div class="t" style="left:38px;top:971.8px;height:30px;line-height:30px;font-size:19px;color:#555864;font-weight:normal;">JMS</div>
<div class="t" style="left:111px;top:971.8px;height:30px;line-height:30px;font-size:19px;color:#555864;font-weight:normal;">src</div>
<div class="t" style="left:171px;top:971.8px;height:30px;line-height:30px;font-size:19px;color:#555864;font-weight:normal;">main</div>
<div class="t" style="left:250px;top:971.8px;height:30px;line-height:30px;font-size:19px;color:#555864;font-weight:normal;">java</div>
<div class="t" style="left:321px;top:971.8px;height:30px;line-height:30px;font-size:19px;color:#555864;font-weight:normal;">com</div>
<div class="t" style="left:394px;top:971.8px;height:30px;line-height:30px;font-size:19px;color:#555864;font-weight:normal;">jms</div>
<svg style="position:absolute;left:87.75px;top:978.5px;" width="9.5" height="15" viewBox="0 0 9.5 15"><path d="M2 2 L7.5 7.5 L2 13" fill="none" stroke="#6C707E" stroke-width="1.4" stroke-linecap="round" stroke-linejoin="round"/></svg>
<svg style="position:absolute;left:147.75px;top:978.5px;" width="9.5" height="15" viewBox="0 0 9.5 15"><path d="M2 2 L7.5 7.5 L2 13" fill="none" stroke="#6C707E" stroke-width="1.4" stroke-linecap="round" stroke-linejoin="round"/></svg>
<svg style="position:absolute;left:227.75px;top:978.5px;" width="9.5" height="15" viewBox="0 0 9.5 15"><path d="M2 2 L7.5 7.5 L2 13" fill="none" stroke="#6C707E" stroke-width="1.4" stroke-linecap="round" stroke-linejoin="round"/></svg>
<svg style="position:absolute;left:298.75px;top:978.5px;" width="9.5" height="15" viewBox="0 0 9.5 15"><path d="M2 2 L7.5 7.5 L2 13" fill="none" stroke="#6C707E" stroke-width="1.4" stroke-linecap="round" stroke-linejoin="round"/></svg>
<svg style="position:absolute;left:372.25px;top:978.5px;" width="9.5" height="15" viewBox="0 0 9.5 15"><path d="M2 2 L7.5 7.5 L2 13" fill="none" stroke="#6C707E" stroke-width="1.4" stroke-linecap="round" stroke-linejoin="round"/></svg>
<svg style="position:absolute;left:437.75px;top:978.5px;" width="9.5" height="15" viewBox="0 0 9.5 15"><path d="M2 2 L7.5 7.5 L2 13" fill="none" stroke="#6C707E" stroke-width="1.4" stroke-linecap="round" stroke-linejoin="round"/></svg>
<svg style="position:absolute;left:462.5px;top:973.5px;" width="24" height="23" viewBox="0 0 24 23"><circle cx="10.8" cy="11.2" r="9.6" fill="#E7EFFD" stroke="#3574F0" stroke-width="1.8"/><path d="M14.2 8.6 A4.6 4.6 0 1 0 14.6 13.6" fill="none" stroke="#3574F0" stroke-width="1.8"/><path d="M13.2 1.2 L22.2 6.2 L13.2 11.2 Z" fill="#E8F5E9" stroke="#208A3C" stroke-width="1.7" stroke-linejoin="round"/></svg>
<div class="t" style="left:491px;top:971.8px;height:30px;line-height:30px;font-size:19px;color:#555864;font-weight:normal;letter-spacing:-0.2px;">JmsConsumer</div>
<div class="t" style="left:1562px;top:971.8px;height:30px;line-height:30px;font-size:19px;color:#5E616E;font-weight:normal;letter-spacing:-0.3px;">99:1</div>
<div class="box" style="left:0;top:59px;width:1920px;height:1px;background:#1E2025;"></div>
<div class="box" style="left:0;top:60px;width:1920px;height:1px;background:#FFFFFF;"></div>
<div class="box" style="left:526px;top:61px;width:1325px;height:1px;background:#EBECF0;"></div>
<div class="box" style="left:0;top:1008px;width:1920px;height:10px;background:#8AA0C2;"></div>
<div class="box" style="left:0;top:1008px;width:1920px;height:1px;background:#6E7F9A;"></div>
<div class="box" style="left:483px;top:1014px;width:58px;height:8px;border-radius:5px;background:#84444A;border:1px solid #A06066;box-sizing:border-box;"></div>
<div class="box" style="left:549px;top:1014px;width:58px;height:8px;border-radius:5px;background:#84444A;border:1px solid #A06066;box-sizing:border-box;"></div>
<div class="box" style="left:614px;top:1014px;width:52px;height:8px;border-radius:5px;background:#8FA5C6;border:1px solid #A5B7D2;box-sizing:border-box;"></div>
<div class="box" style="left:1652px;top:969px;width:267px;height:39px;background:#FFFFFF;border:1.5px solid #BFD0EA;border-radius:4px;box-sizing:border-box;"></div>
<svg style="position:absolute;left:1612px;top:958px;" width="56" height="54" viewBox="0 0 56 54"><defs><linearGradient id="sg" x1="0" y1="1" x2="1" y2="0"><stop offset="0" stop-color="#F04A0E"/><stop offset="1" stop-color="#F8773F"/></linearGradient></defs><g transform="rotate(-14 28 27.5)"><rect x="8.5" y="8" width="39" height="39" rx="5" fill="url(#sg)"/><path d="M41 16.5 Q33 14 24 15.5 Q14.5 17.5 15.5 23.5 Q16.5 28 27 28 Q37.5 28 38 32.5 Q38.5 38.5 25.5 39.5 Q19 40 14.5 38.5" fill="none" stroke="#fff" stroke-width="5.6" stroke-linecap="butt"/></g></svg>
<svg style="position:absolute;left:1672px;top:977px;" width="26" height="24" viewBox="0 0 26 24"><g fill="none" stroke="#1C6FD9" stroke-width="3.2"><rect x="3" y="6.5" width="18" height="9.5" rx="1"/><path d="M12 1 V23"/></g></svg>
<svg style="position:absolute;left:1708px;top:976px;" width="26" height="26" viewBox="0 0 26 26"><circle cx="8.8" cy="8.7" r="2.9" fill="none" stroke="#0A6FDC" stroke-width="2.2"/><circle cx="18.5" cy="12.7" r="2.6" fill="#0A6FDC"/><path d="M20.6 12.5 Q21.5 17.5 16 21.5" fill="none" stroke="#0A6FDC" stroke-width="2.2" stroke-linecap="round"/></svg>
<svg style="position:absolute;left:1744px;top:974px;" width="24" height="28" viewBox="0 0 24 28"><rect x="7.5" y="2" width="9" height="16" rx="4.5" fill="#1C6FD9"/><path d="M4 13.5 Q4 21 12 21 Q20 21 20 13.5" fill="none" stroke="#1C6FD9" stroke-width="2.2"/><path d="M12 21 V25.5 M8.5 25.5 H15.5" stroke="#1C6FD9" stroke-width="2.2" stroke-linecap="round"/></svg>
<svg style="position:absolute;left:1780px;top:977px;" width="26" height="22" viewBox="0 0 26 22"><rect x="2" y="2" width="22" height="17" rx="2.6" fill="none" stroke="#0A6FDC" stroke-width="2.6"/><rect x="5.0" y="5.4" width="2.8" height="2.6" fill="#0A6FDC"/><rect x="5.0" y="9.2" width="2.8" height="2.6" fill="#0A6FDC"/><rect x="9.3" y="5.4" width="2.8" height="2.6" fill="#0A6FDC"/><rect x="9.3" y="9.2" width="2.8" height="2.6" fill="#0A6FDC"/><rect x="13.6" y="5.4" width="2.8" height="2.6" fill="#0A6FDC"/><rect x="13.6" y="9.2" width="2.8" height="2.6" fill="#0A6FDC"/><rect x="17.9" y="5.4" width="2.8" height="2.6" fill="#0A6FDC"/><rect x="17.9" y="9.2" width="2.8" height="2.6" fill="#0A6FDC"/><rect x="5" y="13" width="16" height="2.6" fill="#0A6FDC"/></svg>
<svg style="position:absolute;left:1812px;top:968px;" width="34" height="34" viewBox="0 0 34 34"><defs><linearGradient id="ts" x1="0.1" y1="0.1" x2="0.8" y2="1"><stop offset="0" stop-color="#FF5A30"/><stop offset="0.55" stop-color="#A874FF"/><stop offset="1" stop-color="#66DDFF"/></linearGradient></defs><path d="M5 13 Q5 11.3 6.5 11 L11 10.8 Q11.8 12.5 13 12.5 H16.5 Q17.8 12.5 18.7 10.8 L23.5 11 Q27 11.5 27 14 V18 Q27 20 25 20 H22.3 V29.5 H10 V20 H7 Q5 20 5 18 Z" fill="url(#ts)"/><circle cx="27.7" cy="7.3" r="4.5" fill="#FF5030"/></svg>
<svg style="position:absolute;left:1854px;top:978px;" width="24" height="23" viewBox="0 0 24 23"><g fill="#0A6FDC"><rect x="1.8" y="1.7" width="8.3" height="8.3" rx="2.6"/><rect x="1.8" y="12" width="8.3" height="8.3" rx="2.6"/><rect x="12" y="12" width="8.3" height="8.3" rx="2.6"/><rect x="12" y="1.7" width="8.3" height="8.3" rx="2.6"/></g><rect x="15" y="4.8" width="2.6" height="2.6" fill="#fff"/></svg>
<svg style="position:absolute;left:1884px;top:970px;" width="36" height="36" viewBox="0 0 36 36"><path d="M5 12 Q4 5 9 3 Q13 5 15.5 6 Q18 5.5 21 6 Q24 3 28 4 Q30 8 29 13 Q30 16 29.5 19 A13.7 13.7 0 1 1 5 12 Z" fill="#FDFDFD" stroke="#F0E8EE" stroke-width="0.8"/><path d="M4.5 14.5 Q12 11 22 12 L21.5 19 Q13 19.5 5.5 21.5 Z" fill="#F07A2E"/><ellipse cx="8.8" cy="17.3" rx="1.1" ry="1.8" fill="#222"/><path d="M16 17.5 L18.5 16" stroke="#333" stroke-width="1.2" stroke-linecap="round"/><ellipse cx="9.5" cy="22.5" rx="3.3" ry="1.6" fill="#222"/><path d="M19.5 23 Q18.5 26 15.5 27.5" fill="none" stroke="#333" stroke-width="1.2" stroke-linecap="round"/><path d="M29 9 L30.3 12 L33.5 13 L30.3 14 L29 17 L27.7 14 L24.5 13 L27.7 12 Z" fill="#F8E047"/></svg>
</body></html>
